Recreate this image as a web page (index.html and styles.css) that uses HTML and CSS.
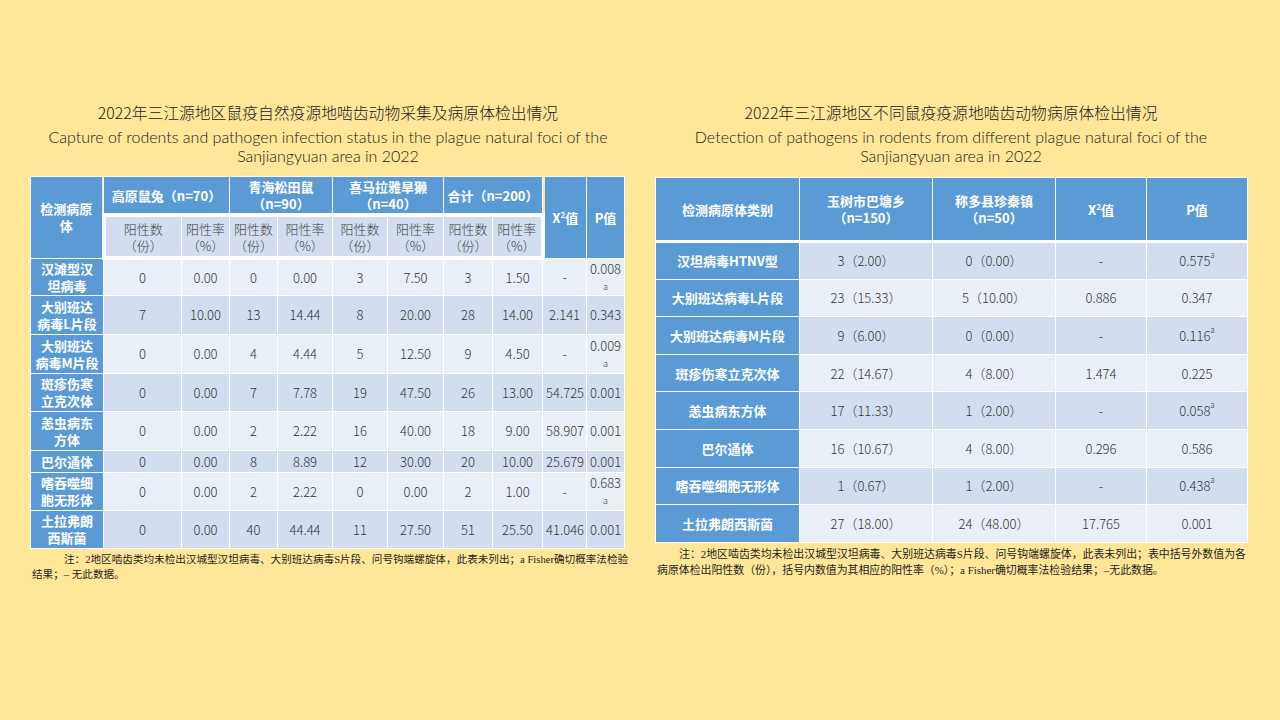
FILE: index.html
```html
<!DOCTYPE html>
<html lang="zh-CN">
<head>
<meta charset="utf-8">
<title>三江源地区鼠疫疫源地啮齿动物病原体检出情况</title>
<link rel="stylesheet" href="styles.css">
</head>
<body>
<div class="page">
  <section class="panel panel-left">
    <h1 class="title-cn">2022年三江源地区鼠疫自然疫源地啮齿动物采集及病原体检出情况</h1>
    <p class="title-en"><span class="en-line">Capture of rodents and pathogen infection status in the plague natural foci of the</span><span class="en-line">Sanjiangyuan area in 2022</span></p>
    <table class="tbl tbl-left">
      <colgroup>
        <col style="width:73px"><col style="width:78px"><col style="width:48px"><col style="width:48px"><col style="width:55px"><col style="width:55px"><col style="width:56px"><col style="width:49px"><col style="width:50px"><col style="width:44px"><col style="width:38px">
      </colgroup>
      <thead>
        <tr class="h1">
          <th rowspan="2" class="rowhead-h">检测病原<br>体</th>
          <th colspan="2">高原鼠兔（n=70）</th>
          <th colspan="2">青海松田鼠<br>（n=90）</th>
          <th colspan="2">喜马拉雅旱獭<br>（n=40）</th>
          <th colspan="2">合计（n=200）</th>
          <th rowspan="2">Χ<sup>2</sup>值</th>
          <th rowspan="2">P值</th>
        </tr>
        <tr class="h2">
          <td class="first">阳性数<br>（份）</td>
          <td>阳性率<br>（%）</td>
          <td>阳性数<br>（份）</td>
          <td>阳性率<br>（%）</td>
          <td>阳性数<br>（份）</td>
          <td>阳性率<br>（%）</td>
          <td>阳性数<br>（份）</td>
          <td class="last">阳性率<br>（%）</td>
        </tr>
      </thead>
      <tbody>
        <tr class="light r36"><th>汉滩型汉<br>坦病毒</th><td>0</td><td>0.00</td><td>0</td><td>0.00</td><td>3</td><td>7.50</td><td>3</td><td>1.50</td><td>-</td><td class="pv">0.008<br><span class="sa">a</span></td></tr>
        <tr class="dark r39"><th>大别班达<br>病毒L片段</th><td>7</td><td>10.00</td><td>13</td><td>14.44</td><td>8</td><td>20.00</td><td>28</td><td>14.00</td><td>2.141</td><td>0.343</td></tr>
        <tr class="light r39"><th>大别班达<br>病毒M片段</th><td>0</td><td>0.00</td><td>4</td><td>4.44</td><td>5</td><td>12.50</td><td>9</td><td>4.50</td><td>-</td><td class="pv">0.009<br><span class="sa">a</span></td></tr>
        <tr class="dark r38"><th>斑疹伤寒<br>立克次体</th><td>0</td><td>0.00</td><td>7</td><td>7.78</td><td>19</td><td>47.50</td><td>26</td><td>13.00</td><td>54.725</td><td>0.001</td></tr>
        <tr class="light r39"><th>恙虫病东<br>方体</th><td>0</td><td>0.00</td><td>2</td><td>2.22</td><td>16</td><td>40.00</td><td>18</td><td>9.00</td><td>58.907</td><td>0.001</td></tr>
        <tr class="dark r22"><th>巴尔通体</th><td>0</td><td>0.00</td><td>8</td><td>8.89</td><td>12</td><td>30.00</td><td>20</td><td>10.00</td><td>25.679</td><td>0.001</td></tr>
        <tr class="light r38"><th>嗜吞噬细<br>胞无形体</th><td>0</td><td>0.00</td><td>2</td><td>2.22</td><td>0</td><td>0.00</td><td>2</td><td>1.00</td><td>-</td><td class="pv">0.683<br><span class="sa">a</span></td></tr>
        <tr class="dark r38"><th>土拉弗朗<br>西斯菌</th><td>0</td><td>0.00</td><td>40</td><td>44.44</td><td>11</td><td>27.50</td><td>51</td><td>25.50</td><td>41.046</td><td>0.001</td></tr>
      </tbody>
    </table>
    <p class="note note-left">注：2地区啮齿类均未检出汉城型汉坦病毒、大别班达病毒S片段、问号钩端螺旋体，此表未列出；a Fisher确切概率法检验<br>结果；– 无此数据。</p>
  </section>

  <section class="panel panel-right">
    <h1 class="title-cn">2022年三江源地区不同鼠疫疫源地啮齿动物病原体检出情况</h1>
    <p class="title-en"><span class="en-line">Detection of pathogens in rodents from different plague natural foci of the</span><span class="en-line">Sanjiangyuan area in 2022</span></p>
    <table class="tbl tbl-right">
      <colgroup>
        <col style="width:144px"><col style="width:133px"><col style="width:123px"><col style="width:91px"><col style="width:101px">
      </colgroup>
      <thead>
        <tr class="hr">
          <th>检测病原体类别</th>
          <th>玉树市巴塘乡<br>（n=150）</th>
          <th>称多县珍秦镇<br>（n=50）</th>
          <th>Χ<sup>2</sup>值</th>
          <th>P值</th>
        </tr>
      </thead>
      <tbody>
        <tr class="dark rr"><th>汉坦病毒HTNV型</th><td>3（2.00）</td><td>0（0.00）</td><td>-</td><td>0.575<sup class="sup-a">a</sup></td></tr>
        <tr class="light rr"><th>大别班达病毒L片段</th><td>23（15.33）</td><td>5（10.00）</td><td>0.886</td><td>0.347</td></tr>
        <tr class="dark rr"><th>大别班达病毒M片段</th><td>9（6.00）</td><td>0（0.00）</td><td>-</td><td>0.116<sup class="sup-a">a</sup></td></tr>
        <tr class="light rr"><th>斑疹伤寒立克次体</th><td>22（14.67）</td><td>4（8.00）</td><td>1.474</td><td>0.225</td></tr>
        <tr class="dark rr"><th>恙虫病东方体</th><td>17（11.33）</td><td>1（2.00）</td><td>-</td><td>0.058<sup class="sup-a">a</sup></td></tr>
        <tr class="light rr"><th>巴尔通体</th><td>16（10.67）</td><td>4（8.00）</td><td>0.296</td><td>0.586</td></tr>
        <tr class="dark rr"><th>嗜吞噬细胞无形体</th><td>1（0.67）</td><td>1（2.00）</td><td>-</td><td>0.438<sup class="sup-a">a</sup></td></tr>
        <tr class="light rr"><th>土拉弗朗西斯菌</th><td>27（18.00）</td><td>24（48.00）</td><td>17.765</td><td>0.001</td></tr>
      </tbody>
    </table>
    <p class="note note-right">注：2地区啮齿类均未检出汉城型汉坦病毒、大别班达病毒S片段、问号钩端螺旋体，此表未列出；表中括号外数值为各<br>病原体检出阳性数（份），括号内数值为其相应的阳性率（%）；a Fisher确切概率法检验结果；–无此数据。</p>
  </section>
</div>
</body>
</html>
```

FILE: styles.css
```css
html, body {
  margin: 0;
  padding: 0;
}
body {
  width: 1280px;
  height: 720px;
  background: #FFE699;
  font-family: "Noto Sans CJK SC", "Noto Sans", sans-serif;
  color: #262626;
  overflow: hidden;
}
.page {
  display: flex;
  align-items: flex-start;
  padding: 103px 0 0 30px;
  gap: 29px;
}
.panel-left {
  width: 596px;
}
.panel-right {
  width: 592px;
}
.title-cn {
  margin: 0;
  font-size: 15.8px;
  line-height: 20px;
  font-weight: 300;
  text-align: center;
  white-space: nowrap;
  color: #1a1a1a;
}
.title-en {
  margin: 4px 0 11px;
  font-family: "Lato", "Noto Sans", sans-serif;
  font-size: 16px;
  line-height: 19px;
  font-weight: 300;
  text-align: center;
  white-space: nowrap;
  color: #1a1a1a;
}
.en-line {
  display: block;
  height: 19px;
}
.panel-right .title-en {
  margin-bottom: 12px;
}

.tbl {
  border-collapse: collapse;
  table-layout: fixed;
  font-size: 13px;
  line-height: 17px;
}
.tbl-left { width: 594px; }
.tbl-right { width: 592px; }

.tbl th, .tbl td {
  border: 1.5px solid #ffffff;
  padding: 1px 3px;
  text-align: center;
  vertical-align: middle;
  overflow: hidden;
}
.tbl thead th {
  background: #5B9BD5;
  color: #ffffff;
  font-weight: 700;
}
.tbl tbody th {
  background: #5B9BD5;
  color: #ffffff;
  font-weight: 700;
  padding: 1px 2px;
  white-space: nowrap;
}
.tbl td {
  color: #363636;
  font-weight: 300;
  white-space: nowrap;
}
.tbl tr.light td { background: #E9EFF7; }
.tbl tr.dark td { background: #D2DEEF; }

.rowhead-h { padding: 1px 2px; }

/* left table heights */
.tbl-left tr.h1 { height: 36px; }
.tbl-left tr.h2 { height: 43px; }
.tbl-left tr.h2 td {
  background: #D2DEEF;
  border-top: 4px solid #ffffff;
  border-bottom: 4px solid #ffffff;
  font-weight: 300;
  color: #454545;
}
.tbl-left tr.h2 td.first { border-left: 4px solid #ffffff; }
.tbl-left tr.h2 td.last { border-right: 4px solid #ffffff; }
.tbl-left tr.r36 { height: 36px; }
.tbl-left tr.r38 { height: 38px; }
.tbl-left tr.r39 { height: 39px; }
.tbl-left tr.r22 { height: 22px; }
.tbl-left td.pv {
  line-height: 16px;
  padding: 0 1px;
}
.sa {
  font-size: 9px;
  line-height: 12px;
}

/* right table */
.tbl-right thead tr.hr { height: 64px; }
.tbl-right thead th {
  border-bottom: 3.5px solid #ffffff;
  font-weight: 700;
}
.tbl-right tr.rr { height: 37.6px; }
.tbl-right td { font-size: 13px; }
.sup-a {
  font-size: 7px;
  vertical-align: top;
  line-height: 10px;
  position: relative;
  top: -1px;
}
.tbl sup {
  font-size: 8px;
  line-height: 8px;
}

.note {
  margin: 3px 0 0;
  font-family: "Liberation Serif", "Noto Sans CJK SC", serif;
  color: #1f1f1f;
  white-space: nowrap;
}
.note-left {
  font-size: 10.6px;
  line-height: 15px;
  text-indent: 32px;
  padding-left: 2px;
}
.note-right {
  font-size: 10.9px;
  line-height: 16px;
  text-indent: 22px;
  padding-left: 2px;
}
```
